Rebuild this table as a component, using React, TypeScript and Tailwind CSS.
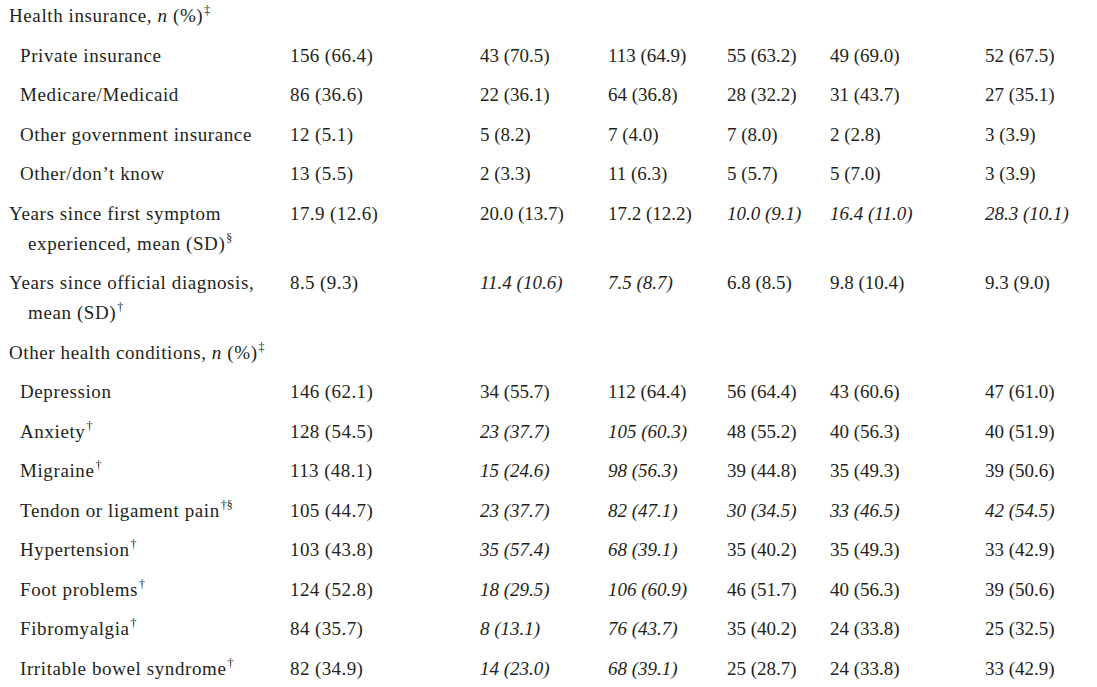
import React from "react";

type Cell = string | { i: string };

const Sup = ({ c }: { c: string }) => (
  <sup className="text-[12px] relative -top-[8px] ml-[1px] tracking-normal">{c}</sup>
);

const rows: {
  label: React.ReactNode;
  sub?: boolean;
  two?: boolean;
  vals?: Cell[];
}[] = [
  {
    label: (
      <>
        Health insurance, <i>n</i> (%)<Sup c="‡" />
      </>
    ),
  },
  { label: "Private insurance", sub: true, vals: ["156 (66.4)", "43 (70.5)", "113 (64.9)", "55 (63.2)", "49 (69.0)", "52 (67.5)"] },
  { label: "Medicare/Medicaid", sub: true, vals: ["86 (36.6)", "22 (36.1)", "64 (36.8)", "28 (32.2)", "31 (43.7)", "27 (35.1)"] },
  { label: "Other government insurance", sub: true, vals: ["12 (5.1)", "5 (8.2)", "7 (4.0)", "7 (8.0)", "2 (2.8)", "3 (3.9)"] },
  { label: "Other/don’t know", sub: true, vals: ["13 (5.5)", "2 (3.3)", "11 (6.3)", "5 (5.7)", "5 (7.0)", "3 (3.9)"] },
  {
    label: (
      <>
        <span className="block">Years since first symptom</span>
        <span className="block pl-[19px]">
          experienced, mean (SD)<Sup c="§" />
        </span>
      </>
    ),
    two: true,
    vals: ["17.9 (12.6)", "20.0 (13.7)", "17.2 (12.2)", { i: "10.0 (9.1)" }, { i: "16.4 (11.0)" }, { i: "28.3 (10.1)" }],
  },
  {
    label: (
      <>
        <span className="block">Years since official diagnosis,</span>
        <span className="block pl-[19px]">
          mean (SD)<Sup c="†" />
        </span>
      </>
    ),
    two: true,
    vals: ["8.5 (9.3)", { i: "11.4 (10.6)" }, { i: "7.5 (8.7)" }, "6.8 (8.5)", "9.8 (10.4)", "9.3 (9.0)"],
  },
  {
    label: (
      <>
        Other health conditions, <i>n</i> (%)<Sup c="‡" />
      </>
    ),
  },
  { label: "Depression", sub: true, vals: ["146 (62.1)", "34 (55.7)", "112 (64.4)", "56 (64.4)", "43 (60.6)", "47 (61.0)"] },
  { label: <>Anxiety<Sup c="†" /></>, sub: true, vals: ["128 (54.5)", { i: "23 (37.7)" }, { i: "105 (60.3)" }, "48 (55.2)", "40 (56.3)", "40 (51.9)"] },
  { label: <>Migraine<Sup c="†" /></>, sub: true, vals: ["113 (48.1)", { i: "15 (24.6)" }, { i: "98 (56.3)" }, "39 (44.8)", "35 (49.3)", "39 (50.6)"] },
  { label: <>Tendon or ligament pain<Sup c="†§" /></>, sub: true, vals: ["105 (44.7)", { i: "23 (37.7)" }, { i: "82 (47.1)" }, { i: "30 (34.5)" }, { i: "33 (46.5)" }, { i: "42 (54.5)" }] },
  { label: <>Hypertension<Sup c="†" /></>, sub: true, vals: ["103 (43.8)", { i: "35 (57.4)" }, { i: "68 (39.1)" }, "35 (40.2)", "35 (49.3)", "33 (42.9)"] },
  { label: <>Foot problems<Sup c="†" /></>, sub: true, vals: ["124 (52.8)", { i: "18 (29.5)" }, { i: "106 (60.9)" }, "46 (51.7)", "40 (56.3)", "39 (50.6)"] },
  { label: <>Fibromyalgia<Sup c="†" /></>, sub: true, vals: ["84 (35.7)", { i: "8 (13.1)" }, { i: "76 (43.7)" }, "35 (40.2)", "24 (33.8)", "25 (32.5)"] },
  { label: <>Irritable bowel syndrome<Sup c="†" /></>, sub: true, vals: ["82 (34.9)", { i: "14 (23.0)" }, { i: "68 (39.1)" }, "25 (28.7)", "24 (33.8)", "33 (42.9)"] },
];

export default function App() {
  return (
    <div
      className="w-[1097px] h-[687px] overflow-hidden bg-white text-[#231f20] text-[19px] leading-[30px]"
      style={{ fontFamily: '"Liberation Serif", "Times New Roman", serif' }}
    >
      {rows.map((r, idx) => (
        <div
          key={idx}
          className={`grid grid-cols-[281px_190px_128px_119px_103px_155px_1fr] pl-[9px] ${idx === 0 ? "pt-[1px] pb-[4.75px]" : "py-[4.75px]"}`}
        >
          <div className={`${r.sub ? "pl-[11px]" : ""} whitespace-nowrap tracking-[0.6px]`}>{r.label}</div>
          {r.vals
            ? r.vals.map((v, j) => (
                <div key={j} className={`whitespace-nowrap ${j === 0 ? "tracking-[0.4px]" : ""}`}>
                  {typeof v === "string" ? v : <i>{v.i}</i>}
                </div>
              ))
            : null}
        </div>
      ))}
    </div>
  );
}
